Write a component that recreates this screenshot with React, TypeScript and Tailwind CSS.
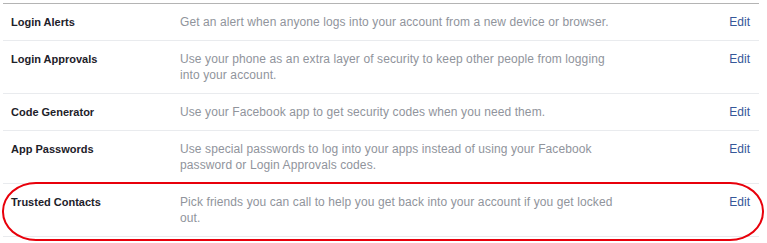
import React from "react";

const rows = [
  { title: "Login Alerts", desc: "Get an alert when anyone logs into your account from a new device or browser." },
  { title: "Login Approvals", desc: "Use your phone as an extra layer of security to keep other people from logging into your account." },
  { title: "Code Generator", desc: "Use your Facebook app to get security codes when you need them." },
  { title: "App Passwords", desc: "Use special passwords to log into your apps instead of using your Facebook password or Login Approvals codes." },
  { title: "Trusted Contacts", desc: "Pick friends you can call to help you get back into your account if you get locked out." },
];

export default function App() {
  return (
    <div
      className="relative w-[767px] h-[243px] bg-white overflow-hidden pt-[3px] pl-[3px]"
      style={{ fontFamily: '"Liberation Sans", Arial, Helvetica, sans-serif' }}
    >
      <div className="w-[756px] border-t border-[#b4b4b4]">
        {rows.map((r) => (
          <div key={r.title} className="flex border-b border-[#e9ebee] py-[10px] text-[12px] leading-[16px]">
            <div className="w-[177px] pl-[8px] font-bold text-[11px] text-[#1d2129]">{r.title}</div>
            <div className="w-[436px] text-[#90949c] tracking-[0.1px]">{r.desc}</div>
            <div className="flex-1 text-right pr-[9px] text-[#365899]">Edit</div>
          </div>
        ))}
      </div>
      <div className="absolute left-[2px] top-[182px] w-[762px] h-[59px] border-2 border-[#e8000b] rounded-[34px/29px] pointer-events-none" />
    </div>
  );
}
